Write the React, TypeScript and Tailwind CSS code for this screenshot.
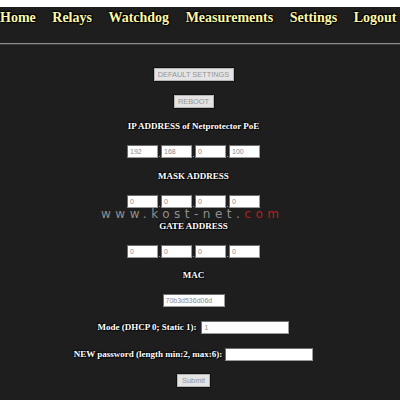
const navItems = ['Home', 'Relays', 'Watchdog', 'Measurements', 'Settings', 'Logout'];

const labelCls =
  "font-['Liberation_Serif',serif] font-bold text-[9px] leading-[13px] text-white [text-shadow:1px_1px_1px_#000,-1px_-1px_1px_#000]";
const inputCls =
  "h-[13px] bg-white border border-[#9a9a9a] border-t-[#6e6e6e] border-l-[#6e6e6e] px-[2px] font-['Liberation_Sans',Arial,sans-serif] text-[7px] leading-[11px] text-[#8a8a8a] outline-none";
const buttonCls =
  "h-[13px] bg-[#e4e4e4] border border-[#b5b5b5] font-['Liberation_Sans',Arial,sans-serif] text-[7.4px] leading-[11px] text-[#949494] shadow-[0_0_0_1px_#111]";

function Octets({ values }: { values: string[] }) {
  return (
    <div className="flex items-end">
      {values.map((v, i) => (
        <div key={i} className="flex items-end">
          {i > 0 && <span className="w-[3px] text-center text-white text-[7px] leading-[7px] font-['Liberation_Sans',sans-serif]">.</span>}
          <input className={`${inputCls} w-[31px]`} defaultValue={v} />
        </div>
      ))}
    </div>
  );
}

export default function App() {
  return (
    <div className="w-[400px] h-[400px] bg-white overflow-hidden">
      <div className="mt-[7px] h-[393px] bg-[#1e1e1e] relative">
        {/* top menu */}
        <nav className="flex gap-[16.5px] pt-[3px] h-[36px] font-['Liberation_Serif',serif] font-bold text-[14px] leading-[16px] text-[#fbf7a8] [text-shadow:1px_1px_1px_#000,-1px_-1px_1px_#000,1px_-1px_1px_#000]">
          {navItems.map((n) => (
            <a key={n} className="whitespace-nowrap">
              {n}
            </a>
          ))}
        </nav>
        <div className="h-[2px] border-t border-[#8c8c8c] bg-[#3a3a3a]" />

        <form className="w-[387px] flex flex-col items-center">
          <button type="button" className={`${buttonCls} w-[80px] mt-[23px]`}>
            DEFAULT SETTINGS
          </button>
          <button type="button" className={`${buttonCls} w-[40px] h-[12px] mt-[14px]`}>
            REBOOT
          </button>

          <p className={`${labelCls} mt-[12px]`}>IP ADDRESS of Netprotector PoE</p>
          <div className="mt-[12px]">
            <Octets values={['192', '168', '0', '100']} />
          </div>

          <p className={`${labelCls} mt-[12px]`}>MASK ADDRESS</p>
          <div className="mt-[12px]">
            <Octets values={['0', '0', '0', '0']} />
          </div>

          <p className={`${labelCls} mt-[12px]`}>GATE ADDRESS</p>
          <div className="mt-[12px]">
            <Octets values={['0', '0', '0', '0']} />
          </div>

          <p className={`${labelCls} mt-[11px]`}>MAC</p>
          <input className={`${inputCls} w-[62px] mt-[12px]`} defaultValue="70b3d536d06d" readOnly />

          <div className="flex items-center gap-[5px] mt-[14px]">
            <span className={labelCls}>Mode (DHCP 0; Static 1):</span>
            <input className={`${inputCls} w-[88px]`} defaultValue="1" />
          </div>

          <div className="flex items-center gap-[3px] mt-[14px]">
            <span className={labelCls}>NEW password (length min:2, max:6):</span>
            <input className={`${inputCls} w-[88px]`} type="password" />
          </div>

          <button type="button" className={`${buttonCls} w-[33px] mt-[13px]`}>
            Submit
          </button>
        </form>

        {/* site watermark */}
        <div className="absolute left-[101px] top-[201px] font-['DejaVu_Sans',sans-serif] text-[12px] leading-[13px] tracking-[4.5px] text-[#8f8f8f] pointer-events-none">
          www.kost-net.<span className="text-[#b81e1e]">com</span>
        </div>
      </div>
    </div>
  );
}
